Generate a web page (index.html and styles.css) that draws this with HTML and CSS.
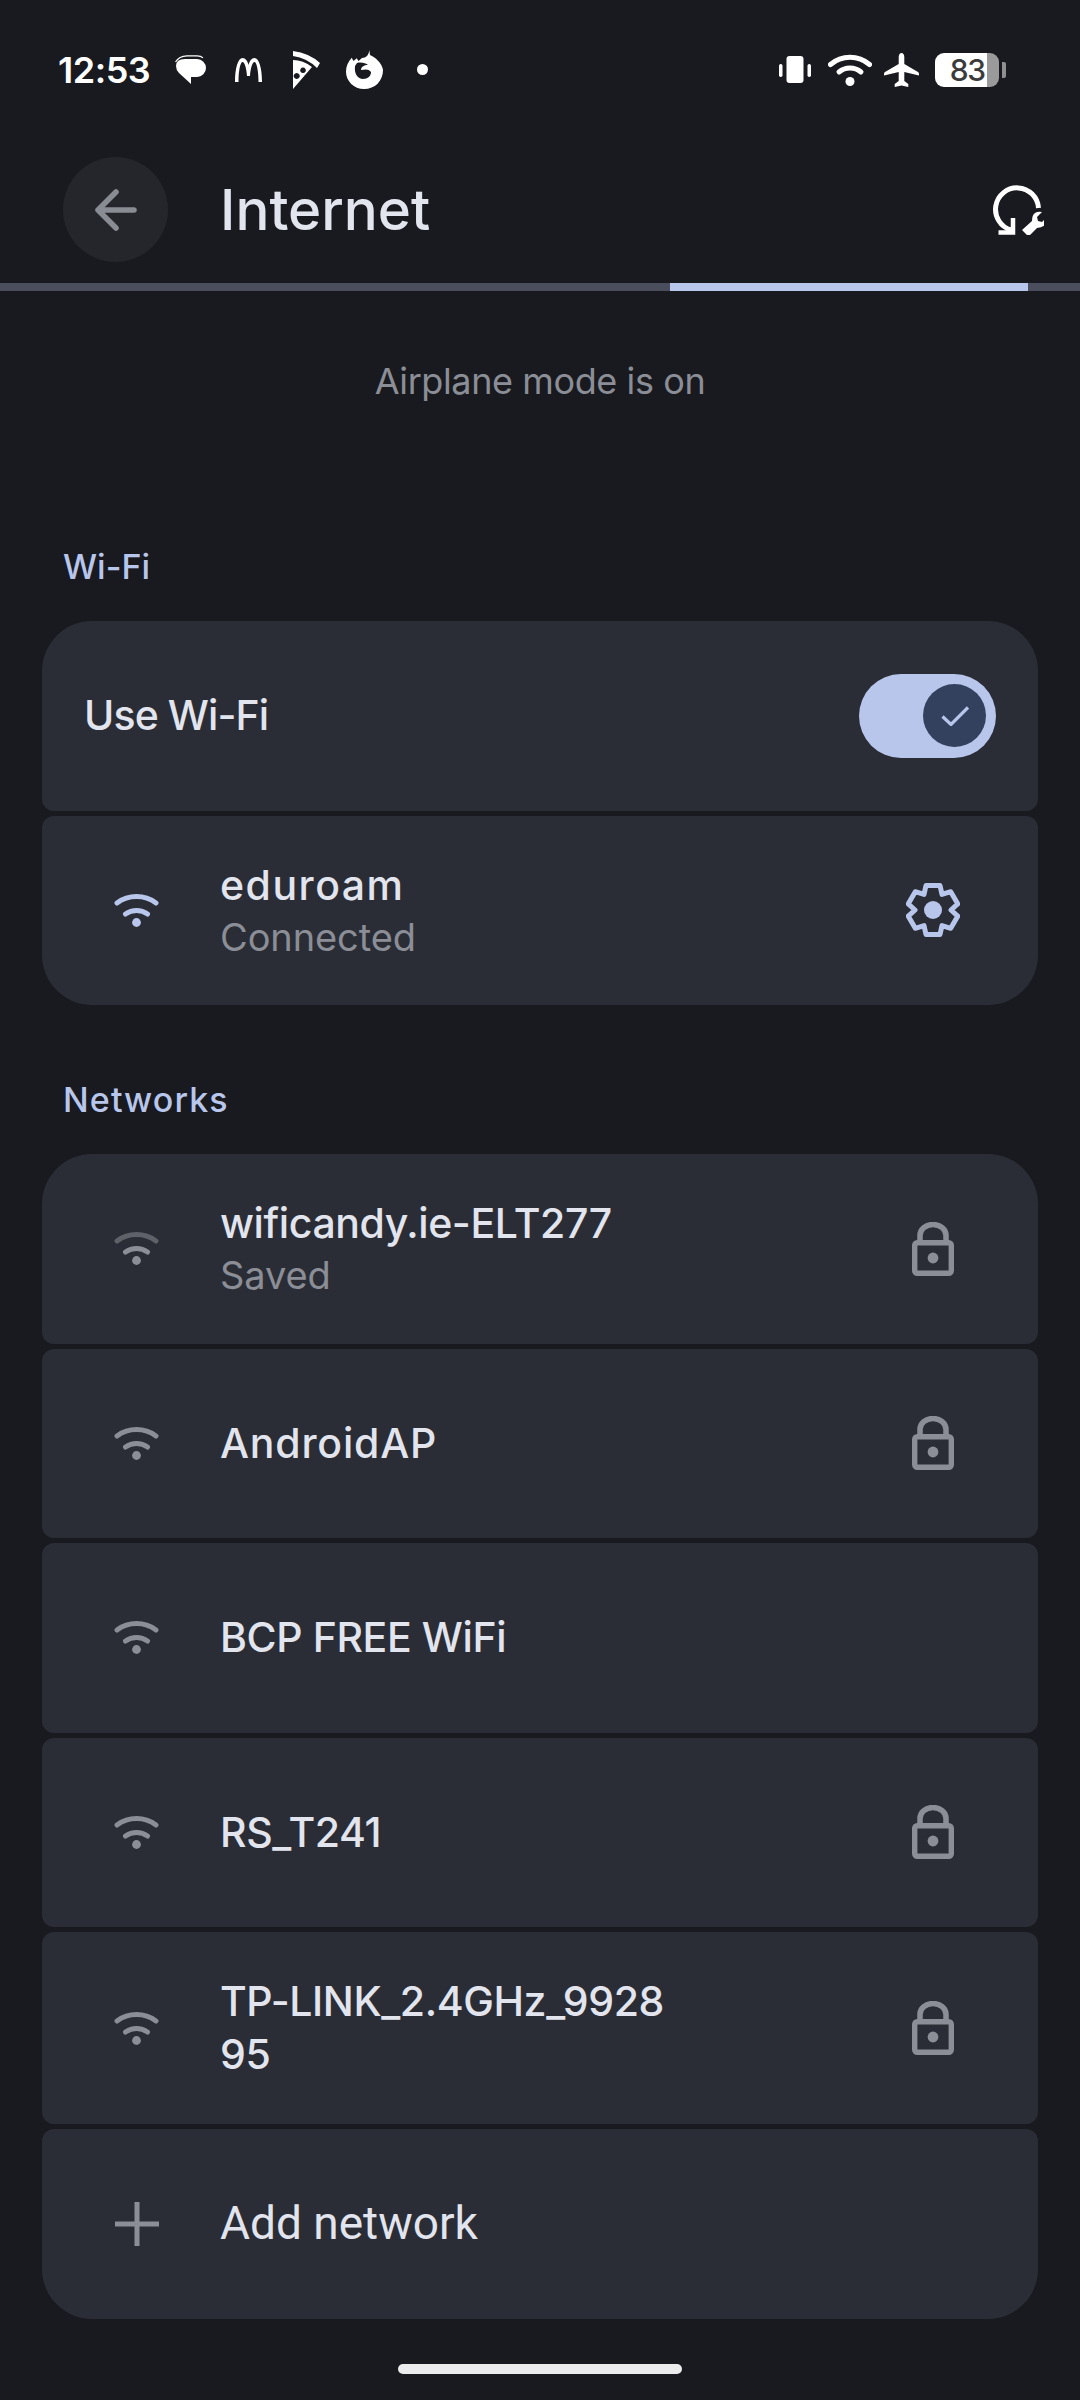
FILE: index.html
```html
<!DOCTYPE html>
<html lang="en">

<head>
    <meta charset="utf-8">
    <title>Internet</title>
    <link rel="stylesheet" href="styles.css">
</head>

<body>
    <svg class="defs" width="0" height="0" aria-hidden="true">
        <symbol id="lock" viewBox="0 0 42 54">
            <path d="M8 20v-6.500a13 11 0 0 1 26 0V20" fill="none" stroke="currentColor" stroke-width="5.500" />
            <rect x="2.700" y="20.700" width="36.600" height="30.600" rx="2.500" fill="none" stroke="currentColor" stroke-width="5.400" />
            <circle cx="21" cy="36" r="5.400" fill="currentColor" />
        </symbol>
        <symbol id="wifi" viewBox="0 0 45 33">
            <path d="M3 9a33 33 0 0 1 39 0" />
            <path d="M11.500 20a19 19 0 0 1 22 0" />
            <circle cx="22.500" cy="28.500" r="4.400" fill="#8b8e96" stroke="none" />
        </symbol>
    </svg>

    <div class="status-bar">
        <span class="clock">12:53</span>
        <div class="notify-icons">
            <svg width="31" height="30" viewBox="0 0 31 30" fill="#fff">
                <path d="M10 4h12a9 9 0 0 1 0 18h-6v7L4 18Q1 15 1 11 1 4 10 4z" />
                <path d="M.5 7Q4 1 12 .8h10q4 0 6 2" fill="none" stroke="#fff" stroke-width="1.200" />
            </svg>
            <svg class="ic-arches" width="27" height="24" viewBox="0 0 27 24" fill="#fff">
                <path d="M0 24C0 10 3 0 7.500 0 10.500 0 12.500 3 13.500 7 14.500 3 16.500 0 19.500 0 24 0 27 10 27 24H23.500C23.500 12 21.500 4 19.500 4 17.500 4 15.500 10 15 18H12C11.500 10 9.500 4 7.500 4 5.500 4 3.500 12 3.500 24z" />
            </svg>
            <svg class="ic-pizza" width="27" height="38" viewBox="0 0 27 38" fill="#fff">
                <path d="M0 0Q16 2 27 12l-3 5Q14 7 0 5z" />
                <path fill-rule="evenodd" d="M0 9Q10 9 19 16L0 38zM10 16.500a2.800 2.800 0 1 0 .01 0zM3.700 22a3 3 0 1 0 .01 0z" />
            </svg>
            <svg class="ic-fox" width="38" height="39" viewBox="0 0 38 39" fill="#fff">
                <path fill-rule="evenodd" d="M23.300 0L24 5C29 7 36 13 37 20 37 31 29 39 18 39 8 39 0 31 0 21.700 0 16 2 12 5.700 7.700L7.500 11 10.700 8.300 12.500 11 16 8C20 8 23 5 23.300 0zM9 16C8 24 12 29 17 29 22 29 25 26 25 22 23 19 20 19 15 20 15 17 18 15 22 15 20 13 15 12 11 13z" />
            </svg>
            <span class="dot"></span>
        </div>
        <div class="system-icons">
            <svg class="ic-vibrate" width="32" height="27" viewBox="0 0 32 27" fill="#fff">
                <rect x="7.500" y="0" width="17" height="27" rx="3" />
                <rect x="0" y="8" width="3.500" height="13" rx="1.700" />
                <rect x="28.500" y="8" width="3.500" height="13" rx="1.700" />
            </svg>
            <svg width="44" height="32" viewBox="0 0 44 32" fill="none" stroke="#fff" stroke-width="5" stroke-linecap="round">
                <path d="M2.500 10.500a30 30 0 0 1 39 0" />
                <path d="M11 18a17 17 0 0 1 22 0" />
                <circle cx="22" cy="27.500" r="4.500" fill="#fff" stroke="none" />
            </svg>
            <svg width="35" height="34" viewBox="0 0 35 34" fill="#fff">
                <path d="M17.500 0q2.500 0 2.800 4V11L34 19q1 .6 1 2v1.500L20.300 19v9l4 3v3l-6.800-1.500L10.700 34v-3l4-3v-9L0 22.500V21q0-1.400 1-2l13.700-8V4q.3-4 2.800-4z" />
            </svg>
            <div class="battery">
                <div class="battery-body">83</div>
                <span class="battery-tip"></span>
            </div>
        </div>
    </div>

    <header class="app-bar">
        <button class="back-btn" aria-label="Back">
            <svg width="42" height="42" viewBox="0 0 42 42" fill="none" stroke="currentColor" stroke-width="5.500" stroke-linecap="round" stroke-linejoin="round">
                <path d="M39 21H3M21 3L3 21l18 18" />
            </svg>
        </button>
        <h1 class="title">Internet</h1>
        <svg class="help-icon" width="51" height="50" viewBox="0 0 51 50" fill="none" stroke="#fff">
            <path d="M45.500 23A21.500 21.500 0 1 0 18 45" stroke-width="5" />
            <path d="M5.500 47.500H20V33" stroke-width="4.500" />
            <path d="M34 50l-5-5 10-9q0-6 3-8t7-1l-5 5 1 4 4 1 5-5q1 5-2 8t-8 3l-8 8z" fill="#fff" stroke="none" />
        </svg>
    </header>

    <div class="progress"><span class="progress-fill"></span></div>

    <main>
        <p class="airplane">Airplane mode is on</p>

        <h2 class="section-label">Wi-Fi</h2>
        <section class="card-group">
            <div class="row">
                <span class="row-text use-wifi">Use Wi-Fi</span>
                <div class="switch">
                    <span class="switch-thumb">
                        <svg width="28" height="20" viewBox="0 0 28 20" fill="none" stroke="#b8c6ec" stroke-width="3.200">
                            <path d="M1.500 10.500l8.500 8L27 1.500" />
                        </svg>
                    </span>
                </div>
            </div>
            <div class="row">
                <svg class="wifi-icon" viewBox="0 0 45 33" fill="none" stroke="#b8c6ec" stroke-width="5" stroke-linecap="round">
                    <path d="M3 9a33 33 0 0 1 39 0" />
                    <path d="M11.500 20a19 19 0 0 1 22 0" />
                    <circle cx="22.500" cy="28.500" r="4.400" fill="#b8c6ec" stroke="none" />
                </svg>
                <div class="row-body">
                    <div class="row-text text-wide">eduroam</div>
                    <div class="row-sub">Connected</div>
                </div>
                <svg class="row-end" width="54" height="54" viewBox="0 0 54 54" fill="none" stroke="#b8c6ec" stroke-width="5" stroke-linejoin="round">
                    <path d="M20 2.500H34L36 11.400 44.700 8.700 51.700 20.800 45 27 51.700 33.200 44.700 45.300 36 42.600 34 51.500H20L18 42.600 9.300 45.300 2.300 33.200 9 27 2.300 20.800 9.300 8.700 18 11.400z" />
                    <circle cx="27" cy="27" r="9" fill="#b8c6ec" stroke="none" />
                </svg>
            </div>
        </section>

        <h2 class="section-label networks-label">Networks</h2>
        <section class="card-group">
            <div class="row">
                <svg class="wifi-icon" viewBox="0 0 45 33" fill="none" stroke="#8b8e96" stroke-width="5" stroke-linecap="round">
                    <path class="arc-dim" d="M3 9a33 33 0 0 1 39 0" />
                    <path d="M11.500 20a19 19 0 0 1 22 0" />
                    <circle cx="22.500" cy="28.500" r="4.400" fill="#8b8e96" stroke="none" />
                </svg>
                <div class="row-body">
                    <div class="row-text">wificandy.ie-ELT277</div>
                    <div class="row-sub">Saved</div>
                </div>
                <svg class="row-end lock-icon"><use href="#lock" /></svg>
            </div>
            <div class="row">
                <svg class="wifi-icon" fill="none" stroke="#8b8e96" stroke-width="5" stroke-linecap="round"><use href="#wifi" /></svg>
                <div class="row-body">
                    <div class="row-text text-wider">AndroidAP</div>
                </div>
                <svg class="row-end lock-icon"><use href="#lock" /></svg>
            </div>
            <div class="row">
                <svg class="wifi-icon" fill="none" stroke="#8b8e96" stroke-width="5" stroke-linecap="round"><use href="#wifi" /></svg>
                <div class="row-body">
                    <div class="row-text">BCP FREE WiFi</div>
                </div>
            </div>
            <div class="row">
                <svg class="wifi-icon" fill="none" stroke="#8b8e96" stroke-width="5" stroke-linecap="round"><use href="#wifi" /></svg>
                <div class="row-body">
                    <div class="row-text">RS_T241</div>
                </div>
                <svg class="row-end lock-icon"><use href="#lock" /></svg>
            </div>
            <div class="row row-tall">
                <svg class="wifi-icon" fill="none" stroke="#8b8e96" stroke-width="5" stroke-linecap="round"><use href="#wifi" /></svg>
                <div class="row-body">
                    <div class="row-text">TP-LINK_2.4GHz_9928<br>95</div>
                </div>
                <svg class="row-end lock-icon"><use href="#lock" /></svg>
            </div>
            <div class="row">
                <svg class="plus-icon" width="44" height="44" viewBox="0 0 44 44" fill="none" stroke="#8b8e96" stroke-width="5">
                    <path d="M22 0v44M0 22h44" />
                </svg>
                <div class="row-body">
                    <div class="row-text add-text">Add network</div>
                </div>
            </div>
        </section>
    </main>

    <div class="nav-area"><span class="home-bar"></span></div>
</body>

</html>
```

FILE: styles.css
```css
* {
    margin: 0;
    padding: 0;
    box-sizing: border-box;
}

html,
body {
    height: 2400px;
    overflow: hidden;
}

body {
    background-color: #191a1f;
    color: #e2e4ee;
    font-family: Inter, "Noto Sans", sans-serif;
    font-weight: 400;
}

.defs {
    display: none;
}

/* status bar */
.status-bar {
    display: flex;
    align-items: center;
    height: 49px;
    margin-top: 45px;
    padding: 0 74.500px 0 58px;
    color: #fff;
}

.clock {
    width: 117px;
    font-size: 36px;
    font-weight: 600;
    letter-spacing: -.5px;
}

.notify-icons {
    display: flex;
    align-items: center;
}

.ic-arches {
    margin-left: 29px;
}

.ic-pizza {
    margin-left: 31px;
}

.ic-fox {
    margin-left: 26px;
}

.dot {
    width: 11px;
    height: 11px;
    margin-left: 33px;
    border-radius: 50%;
    background-color: #fff;
}

.system-icons {
    display: flex;
    align-items: center;
    gap: 12px;
    margin-left: auto;
}

.ic-vibrate {
    margin-right: 5px;
}

.battery {
    display: flex;
    align-items: center;
    gap: 3px;
    margin-left: 3.500px;
}

.battery-body {
    width: 64px;
    height: 34px;
    padding-right: 14px;
    border-radius: 9px;
    background: linear-gradient(90deg, #fff 52px, #9a9a9a 52px);
    color: #3b3b3b;
    font-size: 30px;
    font-weight: 500;
    letter-spacing: -1.500px;
    line-height: 34px;
    text-align: right;
}

.battery-tip {
    width: 4px;
    height: 16px;
    border-radius: 0 2px 2px 0;
    background-color: #8f8f8f;
}

/* app bar */
.app-bar {
    display: flex;
    align-items: center;
    height: 105px;
    margin-top: 63px;
    padding: 0 36px 0 63px;
}

.back-btn {
    display: grid;
    place-items: center;
    width: 105px;
    height: 105px;
    border: none;
    border-radius: 50%;
    background-color: #25262b;
    color: #8a8c94;
}

.title {
    margin-left: 52px;
    font-size: 56.500px;
    font-weight: 450;
}

.help-icon {
    margin-left: auto;
}

.progress {
    height: 8px;
    margin-top: 21px;
    padding-left: 670px;
    background-color: #4a4e5d;
}

.progress-fill {
    display: block;
    width: 358px;
    height: 100%;
    background-color: #b8c6ec;
}

/* content */
main {
    padding: 0 42px;
}

.airplane {
    margin-top: 66px;
    color: #8b8e96;
    font-size: 36px;
    letter-spacing: -.4px;
    line-height: 48px;
    text-align: center;
}

.section-label {
    margin: 138px 0 30px 21px;
    color: #b8c6ec;
    font-size: 34px;
    font-weight: 500;
    line-height: 48px;
}

.networks-label {
    margin-top: 71px;
    letter-spacing: 1.100px;
}

.card-group {
    display: flex;
    flex-direction: column;
    gap: 5px;
}

.row {
    display: flex;
    align-items: center;
    height: 189.500px;
    padding-right: 78px;
    border-radius: 12px;
    background-color: #2a2d35;
}

.row-tall {
    height: 192px;
}

.row:first-child {
    border-radius: 50px 50px 12px 12px;
}

.row:last-child {
    border-radius: 12px 12px 50px 50px;
}

.row-text {
    font-size: 41px;
    font-weight: 450;
    letter-spacing: -.4px;
    line-height: 53px;
}

.text-wide {
    letter-spacing: 1.500px;
}

.text-wider {
    letter-spacing: .8px;
}

.use-wifi {
    margin-left: 42px;
    letter-spacing: -.9px;
}

.row-sub {
    color: #8b8e96;
    font-size: 38px;
    letter-spacing: -.1px;
    line-height: 50px;
}

.row-body {
    flex: 1;
    margin-left: 61px;
}

.wifi-icon {
    width: 45px;
    height: 33px;
    margin-left: 72px;
}

.plus-icon {
    margin-left: 73px;
}

.arc-dim {
    stroke: #5e6168;
}

.row-end {
    flex: none;
}

.lock-icon {
    width: 42px;
    height: 54px;
    margin-right: 6px;
    color: #8b8e96;
}

.switch {
    display: flex;
    align-items: center;
    justify-content: flex-end;
    width: 137px;
    height: 84px;
    margin: 0 -36px 0 auto;
    padding-right: 10px;
    border-radius: 42px;
    background-color: #b8c6ec;
}

.switch-thumb {
    display: grid;
    place-items: center;
    width: 63px;
    height: 63px;
    border-radius: 50%;
    background-color: #33415f;
}

.add-text {
    font-family: Roboto, sans-serif;
    font-size: 46px;
    letter-spacing: 0;
}

.nav-area {
    display: flex;
    justify-content: center;
    margin-top: 45.500px;
}

.home-bar {
    width: 284px;
    height: 10px;
    border-radius: 5px;
    background-color: #ececec;
}
```
